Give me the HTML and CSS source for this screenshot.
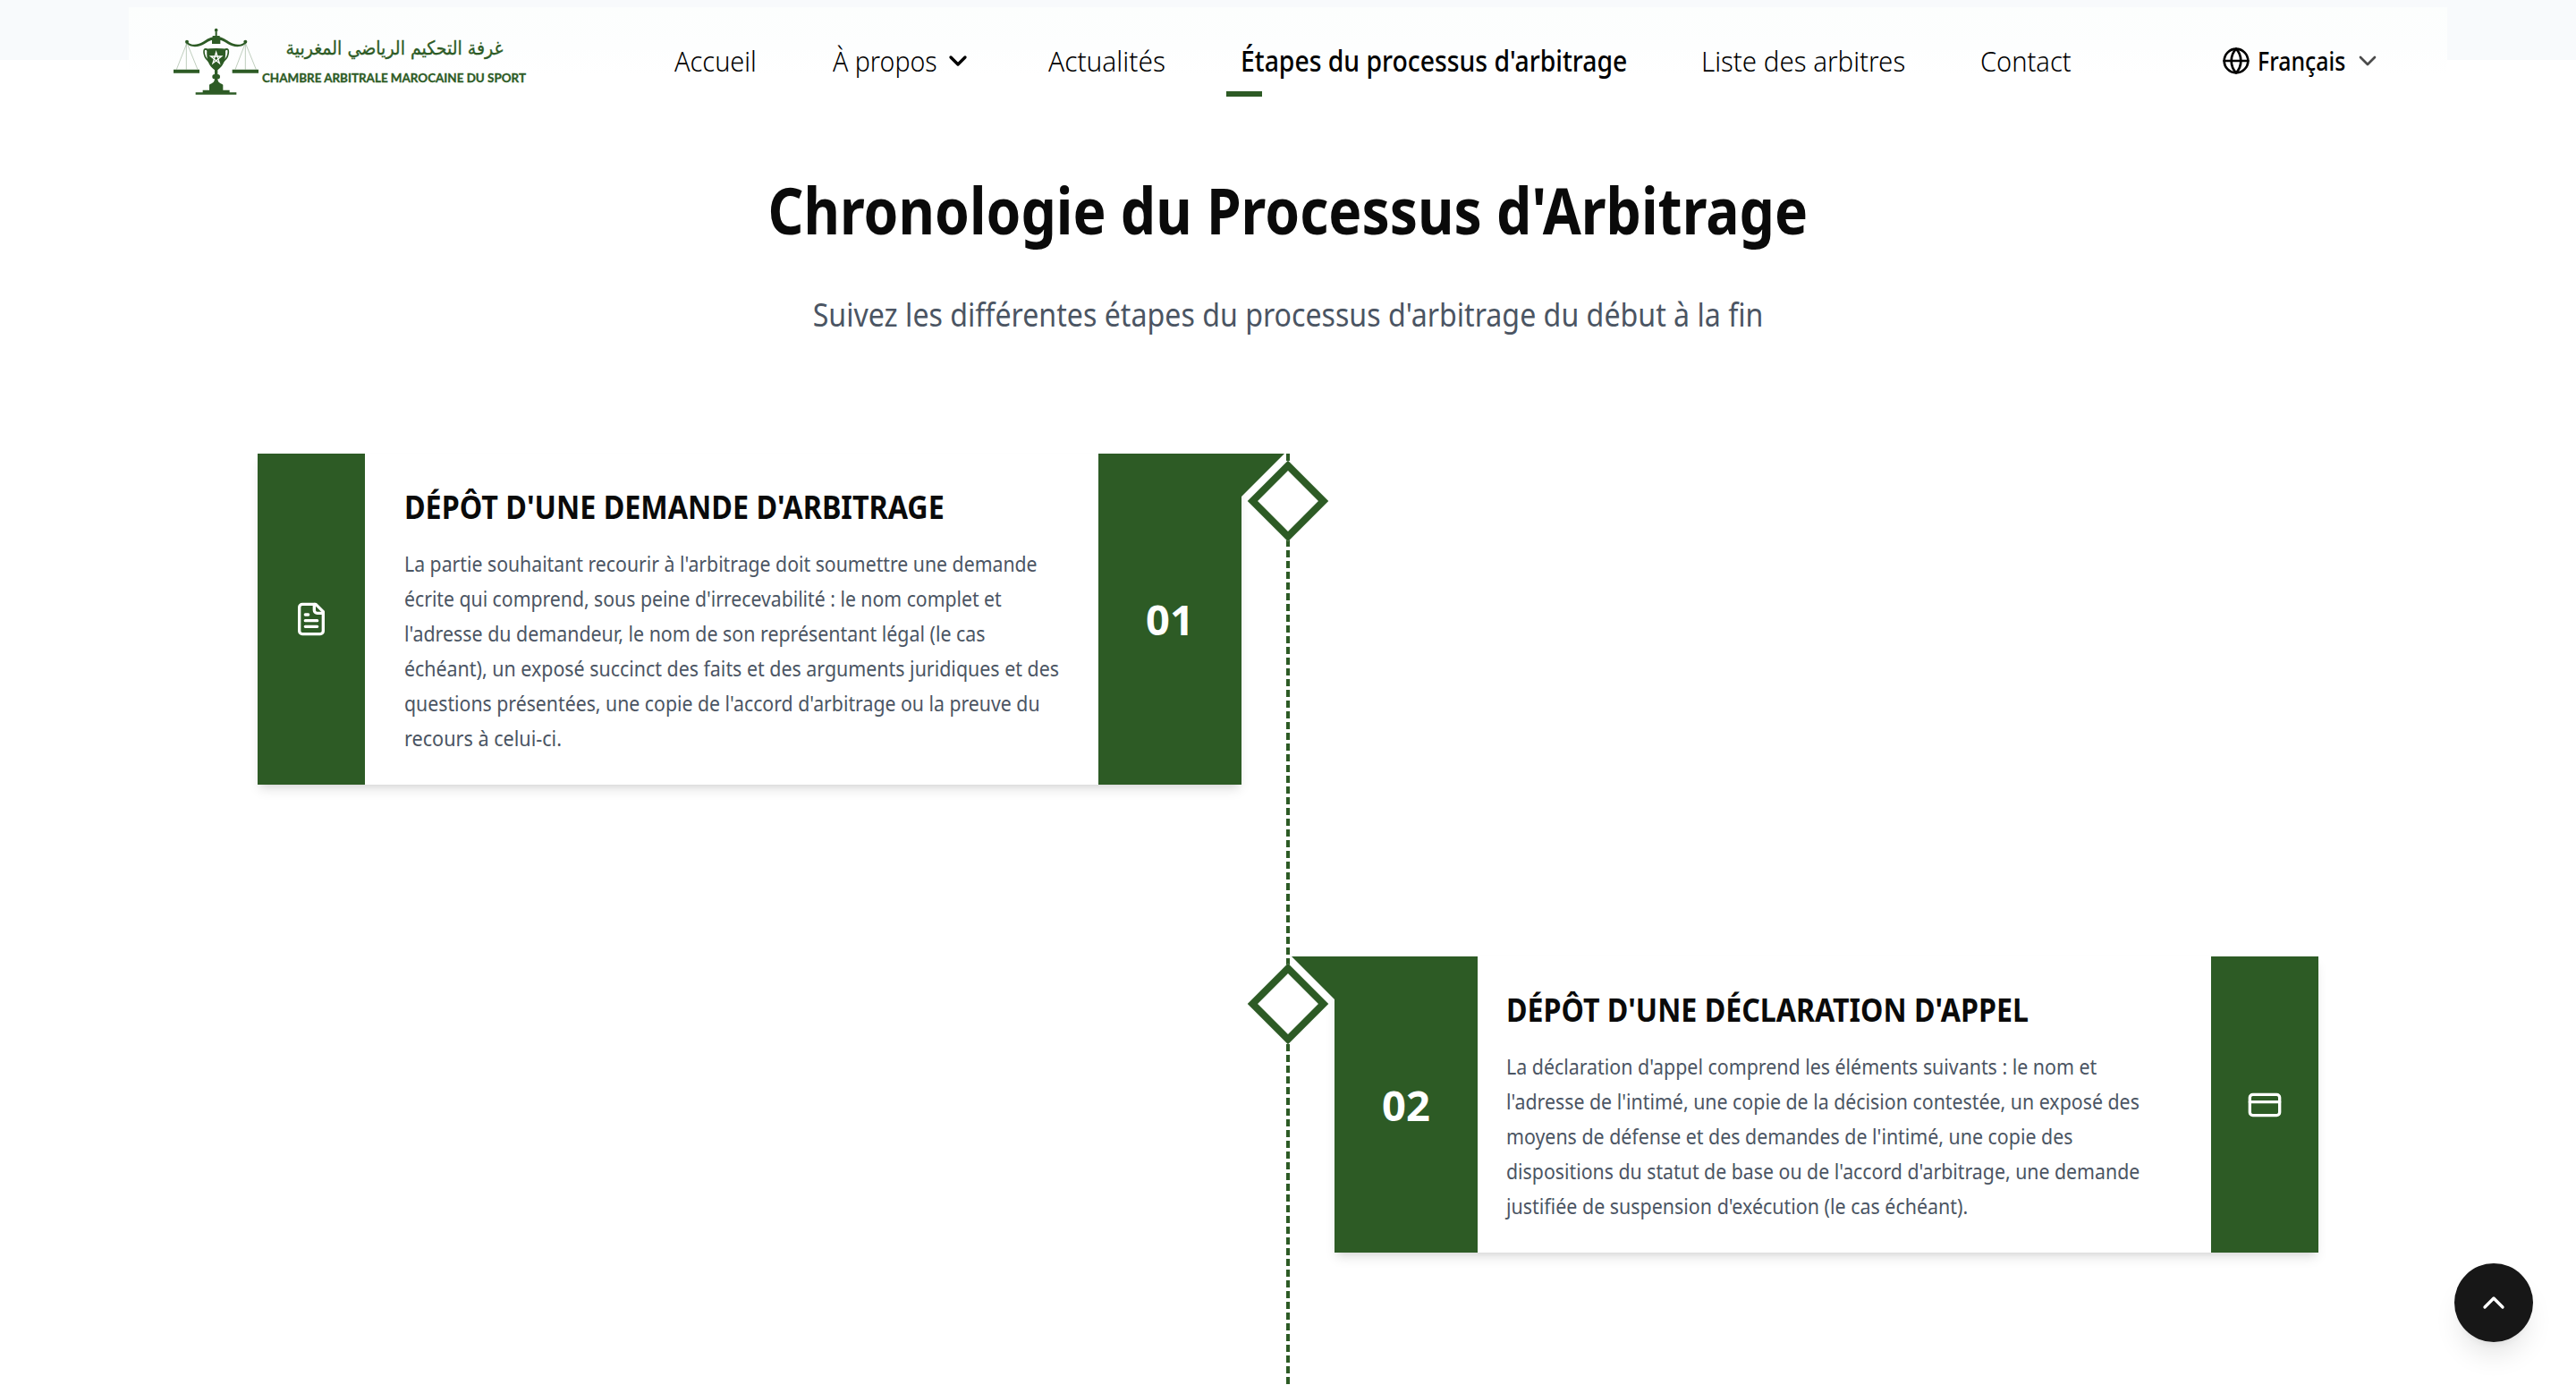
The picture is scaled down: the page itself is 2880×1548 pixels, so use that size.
FILE: index.html
```
<!DOCTYPE html>
<html lang="fr">
<head>
<meta charset="utf-8">
<title>Chambre Arbitrale Marocaine du Sport</title>
<link rel="stylesheet" href="styles.css">
</head>
<body>
<header class="header">
  <div class="bar">
    <a class="logo">
      <svg viewBox="0 0 1200 258" width="400" height="86">
        <g fill="#2d5b25">
          <circle cx="155" cy="23" r="5.500"/>
          <path d="M152 28h6v14h9v8h2v19h-28V50h2v-8h9z"/>
          <circle cx="57" cy="62" r="6"/><circle cx="253" cy="62" r="6"/>
          <path d="M54 64c10 20 45 17 62 5 16-10 26-14 39-14s23 4 39 14c17 12 52 15 62-5l-4-2c-10 12-34 12-50 2-18-12-28-19-47-19s-29 7-47 19c-16 10-40 10-50-2z"/>
          <path d="M12 155h87v12H12zM209 155h88v12h-88z"/>
          <path d="M112 87q43-6 86 0l-12 4c2 34-6 50-26 66v14a8 8 0 0 1 0 16c1 10 5 13 18 19v18h22v8h23v7H86v-7h24v-8h22v-18c13-6 17-9 18-19a8 8 0 0 1 0-16v-14c-20-16-28-32-26-66z"/>
        </g>
        <g fill="none" stroke="#2d5b25">
          <path stroke-width="1.500" opacity=".6" d="M57 66L22 155M57 66l36 89M55 66v89M253 66l-34 89M253 66l36 89M253 66v89"/>
          <path stroke-width="5" d="M127 91c-10-10-15-2-12 12 3 16 10 22 23 29M183 91c10-10 15-2 12 12-3 16-10 22-23 29"/>
        </g>
        <path fill="none" stroke="#fff" stroke-width="4" d="M155 97l11 37-29-23h36l-29 23z"/>
        <text class="logo-ar" x="753" y="105" text-anchor="middle" textLength="729" lengthAdjust="spacingAndGlyphs">غرفة التحكيم الرياضي المغربية</text>
        <text class="logo-fr" x="309" y="198" textLength="885" lengthAdjust="spacingAndGlyphs">CHAMBRE ARBITRALE MAROCAINE DU SPORT</text>
      </svg>
    </a>
    <nav class="nav">
      <a><span class="fit" style="--sx:.904">Accueil</span></a>
      <a class="has-menu"><span class="fit" style="--sx:.892">À propos</span>
        <svg class="chev" viewBox="0 0 24 24" width="32" height="32"><path d="m6 9 6 6 6-6"/></svg></a>
      <a><span class="fit" style="--sx:.9336">Actualités</span></a>
      <a class="active"><span class="fit" style="--sx:.8854">Étapes du processus d'arbitrage</span></a>
      <a><span class="fit" style="--sx:.9206">Liste des arbitres</span></a>
      <a><span class="fit" style="--sx:.907">Contact</span></a>
    </nav>
    <div class="lang">
      <svg class="globe" viewBox="0 0 24 24" width="32" height="32"><circle cx="12" cy="12" r="10"/><path d="M12 2a14.500 14.500 0 0 0 0 20 14.500 14.500 0 0 0 0-20M2 12h20"/></svg>
      <span class="lang-name"><span class="fit" style="--sx:.889">Français</span></span>
      <svg class="chev chev-soft" viewBox="0 0 24 24" width="32" height="32"><path d="m6 9 6 6 6-6"/></svg>
    </div>
  </div>
</header>
<main class="page">
  <h1 class="title"><span class="fit center" style="--sx:.8654">Chronologie du Processus d'Arbitrage</span></h1>
  <p class="subtitle"><span class="fit center" style="--sx:.893">Suivez les différentes étapes du processus d'arbitrage du début à la fin</span></p>

  <section class="timeline">
    <article class="card card-left">
      <div class="side">
        <svg class="icon" viewBox="0 0 24 24" width="40" height="40"><path d="M15 2H6a2 2 0 0 0-2 2v16a2 2 0 0 0 2 2h12a2 2 0 0 0 2-2V7Z"/><path d="M14 2v4a2 2 0 0 0 2 2h4M10 9H8M16 13H8M16 17H8"/></svg>
      </div>
      <div class="content">
        <h2><span class="fit" style="--sx:.8965">DÉPÔT D'UNE DEMANDE D'ARBITRAGE</span></h2>
        <p>
          <span class="fit" style="--sx:.8849">La partie souhaitant recourir à l'arbitrage doit soumettre une demande</span>
          <span class="fit" style="--sx:.8835">écrite qui comprend, sous peine d'irrecevabilité : le nom complet et</span>
          <span class="fit" style="--sx:.8905">l'adresse du demandeur, le nom de son représentant légal (le cas</span>
          <span class="fit" style="--sx:.8913">échéant), un exposé succinct des faits et des arguments juridiques et des</span>
          <span class="fit" style="--sx:.8858">questions présentées, une copie de l'accord d'arbitrage ou la preuve du</span>
          <span class="fit" style="--sx:.901">recours à celui-ci.</span>
        </p>
      </div>
      <div class="num">01</div>
    </article>
    <div class="node"></div>

    <div class="node node-second"></div>
    <article class="card card-right">
      <div class="num">02</div>
      <div class="content">
        <h2><span class="fit" style="--sx:.8925">DÉPÔT D'UNE DÉCLARATION D'APPEL</span></h2>
        <p>
          <span class="fit" style="--sx:.8904">La déclaration d'appel comprend les éléments suivants : le nom et</span>
          <span class="fit" style="--sx:.8891">l'adresse de l'intimé, une copie de la décision contestée, un exposé des</span>
          <span class="fit" style="--sx:.89">moyens de défense et des demandes de l'intimé, une copie des</span>
          <span class="fit" style="--sx:.8872">dispositions du statut de base ou de l'accord d'arbitrage, une demande</span>
          <span class="fit" style="--sx:.8929">justifiée de suspension d'exécution (le cas échéant).</span>
        </p>
      </div>
      <div class="side">
        <svg class="icon" viewBox="0 0 24 24" width="40" height="40"><rect x="2" y="5" width="20" height="14" rx="2"/><path d="M2 10h20"/></svg>
      </div>
    </article>
  </section>
</main>
<button class="to-top" aria-label="Haut de page">
  <svg viewBox="0 0 24 24" width="40" height="40"><path d="m6 15 6-6 6 6"/></svg>
</button>
</body>
</html>
```
FILE: styles.css
```
* { box-sizing: border-box; }

body {
  margin: 0;
  height: 1548px;
  overflow: hidden;
  display: flex;
  flex-direction: column;
  color: #0a0a0a;
  font-family: "Noto Sans", sans-serif;
  background: #fff linear-gradient(#f8fafc, #f8fafc) no-repeat 0 0 / 100% 67px;
}

/* Text set slightly condensed; --sx is the horizontal ratio of the line. */
.fit {
  display: inline-block;
  white-space: nowrap;
  transform: scaleX(var(--sx));
  transform-origin: 0 50%;
}
.fit.center { transform-origin: 50% 50%; }

/* Header */
.header { padding: 8px 144px 0; }
.bar {
  display: flex;
  align-items: center;
  height: 120px;
  padding-left: 46px;
  background: linear-gradient(#fcfefd, #fdfefe 45px, #fff 75px);
}
.logo { display: flex; width: 564px; margin-top: 2px; }
.logo svg { overflow: visible; }
.logo-ar { font: 64px "DejaVu Sans", sans-serif; fill: #2d5b25; stroke: #2d5b25; stroke-width: 1; direction: rtl; }
.logo-fr { font: 700 41px Lato, sans-serif; fill: #2d5b25; stroke: #2d5b25; stroke-width: 1; }
.nav {
  display: grid;
  grid-template-columns: 177px 241px 215px 515px 312px 270px;
  font-size: 32px;
  line-height: 48px;
  font-weight: 300;
  color: #000;
}
.nav a { position: relative; white-space: nowrap; }
.has-menu { display: flex; align-items: center; }
.has-menu .fit { width: 124px; }
.active { font-weight: 500; }
.active::after {
  content: "";
  position: absolute;
  left: -16px;
  top: 58px;
  width: 40px;
  height: 6px;
  background: #2d5b25;
}
.chev, .globe, .icon, .to-top svg {
  fill: none;
  stroke: currentColor;
  stroke-width: 2;
  stroke-linecap: round;
  stroke-linejoin: round;
}
.has-menu .chev { stroke-width: 2.5; }
.lang { display: flex; align-items: center; font-size: 28px; line-height: 48px; font-weight: 500; color: #000; }
.lang-name { width: 107px; margin-left: 8px; }
.chev-soft { opacity: .7; }

/* Heading */
.page { flex: 1; display: flex; flex-direction: column; padding-top: 61px; }
.title { margin: 0; font-size: 72px; line-height: 90px; font-weight: 700; text-align: center; }
.subtitle { margin: 45px 0 0; font-size: 36px; line-height: 56px; text-align: center; color: #4b5563; }

/* Timeline */
.timeline {
  position: relative;
  flex: 1;
  display: grid;
  grid-template-columns: 1100px 104px 1100px;
  grid-template-rows: 562px auto;
  align-items: start;
  justify-content: center;
  margin-top: 127px;
}
.timeline::before {
  content: "";
  position: absolute;
  left: 1438px;
  top: 0;
  bottom: 0;
  width: 4px;
  background: repeating-linear-gradient(#2d5b25 0 8px, transparent 8px 12px);
}
.card {
  display: flex;
  background: #fff;
  box-shadow: 0 8px 12px -2px rgba(0, 0, 0, .1), 0 4px 8px -4px rgba(0, 0, 0, .1);
}
.card-left { height: 370px; }
.card-right { height: 331px; grid-row: 2; grid-column: 3; }
.side {
  flex: none;
  width: 120px;
  display: flex;
  align-items: center;
  justify-content: center;
  background: #2d5b25;
  color: #fff;
}
.content { flex: 1; min-width: 0; padding: 37px 0 0 44px; }
.card-right .content { padding-left: 32px; }
.content h2 { margin: 0 0 21px; font-size: 36px; line-height: 45px; font-weight: 700; }
.content p {
  display: flex;
  flex-direction: column;
  align-items: flex-start;
  margin: 0;
  font-size: 24px;
  line-height: 39px;
  color: #4b5563;
}
.num {
  position: relative;
  flex: none;
  width: 160px;
  display: flex;
  align-items: center;
  justify-content: center;
  background: #2d5b25;
  color: #fff;
  font-size: 47px;
  font-weight: 700;
}
.num::after {
  content: "";
  position: absolute;
  top: 0;
  width: 48px;
  height: 48px;
  background: #2d5b25;
}
.card-left .num::after { left: 100%; clip-path: polygon(0 0, 100% 0, 0 100%); }
.card-right .num::after { right: 100%; clip-path: polygon(0 0, 100% 0, 100% 100%); }
.node {
  position: relative;
  justify-self: center;
  width: 64px;
  height: 64px;
  margin-top: 21px;
  border: 8px solid #2d5b25;
  background: #fff;
  transform: rotate(45deg);
}
.node-second { grid-row: 2; grid-column: 2; }

/* Back to top */
.to-top {
  position: fixed;
  right: 48px;
  bottom: 48px;
  width: 88px;
  height: 88px;
  display: flex;
  align-items: center;
  justify-content: center;
  padding: 0;
  border: 0;
  border-radius: 50%;
  background: #171717;
  color: #fff;
  box-shadow: 0 20px 30px -6px rgba(0, 0, 0, .1), 0 8px 12px -8px rgba(0, 0, 0, .1);
}
```
